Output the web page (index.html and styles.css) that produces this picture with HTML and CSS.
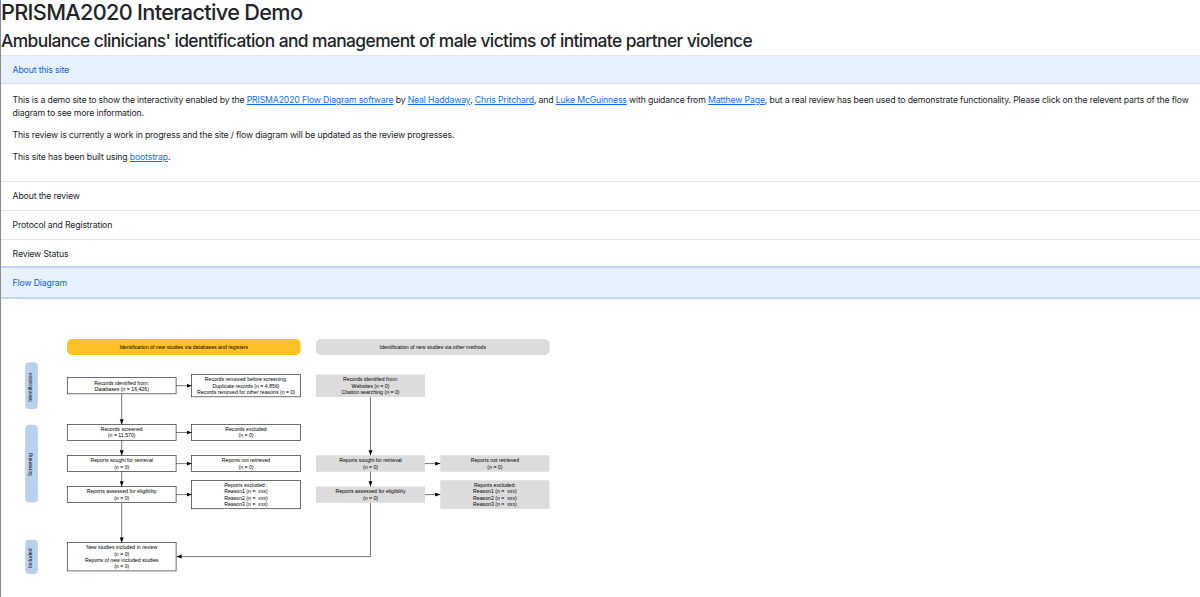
FILE: index.html
```html
<!DOCTYPE html>
<html lang="en">
<head>
    <meta charset="UTF-8">
    <meta name="viewport" content="width=device-width, initial-scale=1.0">
    <title>PRISMA2020 Interactive Demo</title>
    <link rel="stylesheet" href="styles.css">
</head>
<body>
    <h1>PRISMA2020 Interactive Demo</h1>
    <h2>Ambulance clinicians' identification and management of male victims of intimate partner violence</h2>

    <div class="accordion">
        <div class="accordion-item">
            <button class="accordion-button open" type="button">About this site</button>
            <div class="accordion-body">
                <p>This is a demo site to show the interactivity enabled by the <a href="#">PRISMA2020 Flow Diagram software</a> by <a href="#">Neal Haddaway</a>, <a href="#">Chris Pritchard</a>, and <a href="#">Luke McGuinness</a> with guidance from <a href="#">Matthew Page</a>, but a real review has been used to demonstrate functionality. Please click on the relevent parts of the flow<br>diagram to see more information.</p>
                <p>This review is currently a work in progress and the site / flow diagram will be updated as the review progresses.</p>
                <p>This site has been built using <a href="#">bootstrap</a>.</p>
            </div>
        </div>
        <div class="accordion-item">
            <button class="accordion-button" type="button">About the review</button>
        </div>
        <div class="accordion-item">
            <button class="accordion-button" type="button">Protocol and Registration</button>
        </div>
        <div class="accordion-item">
            <button class="accordion-button" type="button">Review Status</button>
        </div>
        <div class="accordion-item">
            <button class="accordion-button open focused" type="button">Flow Diagram</button>
            <svg class="diagram" width="560" height="290" viewBox="0 297 560 290">
                <defs>
                    <marker id="arrow" markerUnits="userSpaceOnUse" markerWidth="6" markerHeight="5" refX="5.2" refY="2" orient="auto">
                        <path d="M0 0 L5.2 2 L0 4 Z"/>
                    </marker>
                </defs>

                <!-- headings -->
                <rect class="databases" x="67" y="339" width="233.6" height="16" rx="5"/>
                <text x="183.8" y="348.8">Identification of new studies via databases and registers</text>
                <rect class="other" x="316" y="339" width="233.6" height="16" rx="5"/>
                <text x="432.8" y="348.8">Identification of new studies via other methods</text>

                <!-- stages -->
                <rect class="stage" x="25.2" y="362.3" width="12.6" height="46.8" rx="4"/>
                <text transform="translate(32.4 387.2) rotate(-90)">Identification</text>
                <rect class="stage" x="25.2" y="424.7" width="12.6" height="77.8" rx="4"/>
                <text transform="translate(32.4 464.7) rotate(-90)">Screening</text>
                <rect class="stage" x="25.2" y="539.7" width="12.6" height="34.3" rx="4"/>
                <text transform="translate(32.4 558.2) rotate(-90)">Included</text>

                <!-- databases and registers -->
                <rect class="box" x="67.3" y="377.6" width="108.8" height="16.2"/>
                <text x="121.7" y="384.5">Records identified from:</text>
                <text x="121.7" y="390.7">Databases (n = 16,426)</text>
                <rect class="box" x="191.6" y="374.6" width="108.8" height="22.2"/>
                <text x="246" y="381.4">Records removed before screening:</text>
                <text x="246" y="387.6">Duplicate records (n = 4,856)</text>
                <text x="246" y="393.8">Records removed for other reasons (n = 0)</text>
                <rect class="box" x="67.3" y="424.4" width="108.8" height="16"/>
                <text x="121.7" y="431.2">Records screened</text>
                <text x="121.7" y="437.4">(n = 11,570)</text>
                <rect class="box" x="191.6" y="424.4" width="108.8" height="16"/>
                <text x="246" y="431.2">Records excluded</text>
                <text x="246" y="437.4">(n = 0)</text>
                <rect class="box" x="67.3" y="455.5" width="108.8" height="16"/>
                <text x="121.7" y="462.3">Reports sought for retrieval</text>
                <text x="121.7" y="468.5">(n = 0)</text>
                <rect class="box" x="191.6" y="455.5" width="108.8" height="16"/>
                <text x="246" y="462.3">Reports not retrieved</text>
                <text x="246" y="468.5">(n = 0)</text>
                <rect class="box" x="67.3" y="486.5" width="108.8" height="16"/>
                <text x="121.7" y="493.4">Reports assessed for eligibility</text>
                <text x="121.7" y="499.6">(n = 0)</text>
                <rect class="box" x="191.6" y="480.5" width="108.8" height="28.2"/>
                <text x="246" y="487.1">Reports excluded::</text>
                <text x="246" y="493.3">Reason1 (n =&#160; xxx)</text>
                <text x="246" y="499.5">Reason2 (n =&#160; xxx)</text>
                <text x="246" y="505.7">Reason3 (n =&#160; xxx)</text>
                <rect class="box" x="67.3" y="542.5" width="108.8" height="28.4"/>
                <text x="121.7" y="549.4">New studies included in review</text>
                <text x="121.7" y="555.6">(n = 0)</text>
                <text x="121.7" y="561.8">Reports of new included studies</text>
                <text x="121.7" y="568">(n = 0)</text>

                <!-- other methods -->
                <rect class="other" x="316" y="374.4" width="109" height="22.6"/>
                <text x="370.5" y="381.4">Records identified from:</text>
                <text x="370.5" y="387.6">Websites (n = 0)</text>
                <text x="370.5" y="393.8">Citation searching (n = 0)</text>
                <rect class="other" x="316" y="455.3" width="109" height="16.4"/>
                <text x="370.5" y="462.3">Reports sought for retrieval</text>
                <text x="370.5" y="468.5">(n = 0)</text>
                <rect class="other" x="440.3" y="455.3" width="109.2" height="16.4"/>
                <text x="494.9" y="462.3">Reports not retrieved</text>
                <text x="494.9" y="468.5">(n = 0)</text>
                <rect class="other" x="316" y="486.4" width="109" height="16.4"/>
                <text x="370.5" y="493.4">Reports assessed for eligibility</text>
                <text x="370.5" y="499.6">(n = 0)</text>
                <rect class="other" x="440.3" y="480.3" width="109.2" height="28.6"/>
                <text x="494.9" y="487.1">Reports excluded:</text>
                <text x="494.9" y="493.3">Reason1 (n =&#160; xxx)</text>
                <text x="494.9" y="499.5">Reason2 (n =&#160; xxx)</text>
                <text x="494.9" y="505.7">Reason3 (n =&#160; xxx)</text>

                <!-- arrows -->
                <g class="arrows">
                    <path d="M176 385.7H191.8"/>
                    <path d="M176 432.5H191.8"/>
                    <path d="M176 463.6H191.8"/>
                    <path d="M176 494.6H191.8"/>
                    <path d="M121.7 394V424.4"/>
                    <path d="M121.7 440.5V455.5"/>
                    <path d="M121.7 471.6V486.5"/>
                    <path d="M121.7 502.6V542.6"/>
                    <path d="M370.5 397V455.4"/>
                    <path d="M370.5 471.6V486.5"/>
                    <path d="M425 463.6H440.3"/>
                    <path d="M425 494.6H440.3"/>
                    <path d="M370.5 502.8V556.6H176.4"/>
                </g>
            </svg>
        </div>
    </div>
</body>
</html>
```

FILE: styles.css
```css
body {
    margin: 0;
    height: 597px;
    box-sizing: border-box;
    overflow: hidden;
    border-left: 1px solid #8c8c90;
    font-family: Inter, 'Liberation Sans', sans-serif;
    font-size: 8.7px;
    line-height: 13px;
    letter-spacing: -0.145px;
    color: #212529;
    background: #fff;
}

h1,
h2 {
    margin: 0 0 4px;
    font-weight: 500;
    white-space: nowrap;
}

h1 {
    margin-bottom: 6px;
    font-size: 21.7px;
    line-height: 24px;
    letter-spacing: -0.68px;
}

h2 {
    font-size: 17.4px;
    line-height: 21px;
    letter-spacing: -0.59px;
}

.accordion-item {
    border-top: 1px solid #e4e5e7;
}

.accordion-button {
    display: block;
    width: 100%;
    height: 28px;
    padding: 1px 11.6px 0;
    border: 0;
    background: #fff;
    font: inherit;
    letter-spacing: inherit;
    color: #212529;
    text-align: left;
}

.accordion-button.open {
    color: #0c63e4;
    background: #e7f1ff;
    box-shadow: inset 0 -1px 0 #d2dcea;
}

.accordion-button.focused {
    position: relative;
    height: 29px;
    margin-top: -1px;
    padding-top: 2px;
    box-shadow: 0 0 0 2px #c2d5f5;
}

.accordion-body {
    padding: 10px 0 8px 11.6px;
    white-space: nowrap;
}

.accordion-body p {
    margin: 0 0 9px;
}

a {
    color: #0d6efd;
}

.diagram {
    display: block;
    margin-left: -1px;
}

.diagram text {
    font-family: 'Liberation Sans', Arial, sans-serif;
    font-size: 5.2px;
    letter-spacing: 0;
    text-anchor: middle;
    fill: #000;
}

.databases {
    fill: #ffc125;
}

.other {
    fill: #dcdcdc;
}

.stage {
    fill: #b9d0ef;
}

.box {
    fill: #fff;
    stroke: #333;
    stroke-width: 0.7;
}

.arrows path {
    fill: none;
    stroke: #222;
    stroke-width: 0.6;
    marker-end: url(#arrow);
}

#arrow path {
    fill: #000;
    stroke: none;
}
```
